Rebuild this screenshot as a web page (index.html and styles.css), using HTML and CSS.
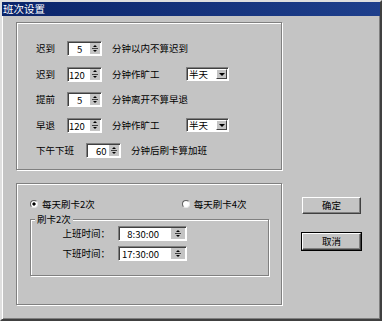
FILE: index.html
```html
<!DOCTYPE html>
<html>
<head>
<meta charset="utf-8">
<title>班次设置</title>
<link rel="stylesheet" href="styles.css">
</head>
<body>
<div class="window">
  <div class="titlebar">班次设置</div>
  <div class="client">
    <div class="main">
      <div class="group rules">
        <div class="row">
          <span class="lbl">迟到</span>
          <span class="spin"><span class="val v5">5</span><span class="arrows"></span></span>
          <span class="desc">分钟以内不算迟到</span>
        </div>
        <div class="row">
          <span class="lbl">迟到</span>
          <span class="spin"><span class="val v120">120</span><span class="arrows"></span></span>
          <span class="desc short">分钟作旷工</span>
          <span class="combo"><span class="text">半天</span><span class="drop"></span></span>
        </div>
        <div class="row">
          <span class="lbl">提前</span>
          <span class="spin"><span class="val v5">5</span><span class="arrows"></span></span>
          <span class="desc">分钟离开不算早退</span>
        </div>
        <div class="row">
          <span class="lbl">早退</span>
          <span class="spin"><span class="val v120">120</span><span class="arrows"></span></span>
          <span class="desc short">分钟作旷工</span>
          <span class="combo"><span class="text">半天</span><span class="drop"></span></span>
        </div>
        <div class="row">
          <span class="lbl">下午下班</span>
          <span class="spin"><span class="val v60">60</span><span class="arrows"></span></span>
          <span class="desc">分钟后刷卡算加班</span>
        </div>
      </div>
      <div class="group punch">
        <div class="radios">
          <span class="radio checked"><span class="dot"></span>每天刷卡2次</span>
          <span class="radio second"><span class="dot"></span>每天刷卡4次</span>
        </div>
        <fieldset class="inner">
          <legend>刷卡2次</legend>
          <div class="trow">
            <span class="tlbl">上班时间：</span>
            <span class="spin time"><span class="val">8:30:00</span><span class="arrows"></span></span>
          </div>
          <div class="trow">
            <span class="tlbl">下班时间：</span>
            <span class="spin time"><span class="val">17:30:00</span><span class="arrows"></span></span>
          </div>
        </fieldset>
      </div>
    </div>
    <div class="buttons">
      <div class="btn">确定</div>
      <div class="btn default">取消</div>
    </div>
  </div>
</div>
</body>
</html>
```
FILE: styles.css
```css
*{margin:0;padding:0;box-sizing:border-box;}
body{background:#fff;font:9.5px/1.3 "Noto Sans CJK SC","Liberation Sans",sans-serif;color:#000;}

.window{width:382px;height:321px;display:flex;flex-direction:column;background:#c4c4c4;border:2px solid;border-color:#dfdfdf #404040 #404040 #dfdfdf;box-shadow:inset 1px 1px 0 #fff,inset -1px -1px 0 #808080;}
.titlebar{height:14px;line-height:14px;padding-left:1px;font-size:10.5px;color:#fff;background:linear-gradient(to right,#0a246a,#1e3f8c);}
.client{flex:1;display:flex;padding:6px 0 0 14px;}
.main{width:266px;display:flex;flex-direction:column;gap:13px;}

/* etched frames */
.group{border:1px solid #808080;box-shadow:inset 1px 1px 0 #fff,1px 1px 0 #fff;}
.rules{height:148px;display:flex;flex-direction:column;gap:10.5px;padding:18px 0 0 19px;}
.row{display:flex;align-items:center;height:15px;}
.lbl{margin-right:12px;}
.desc{margin-left:10px;}
.desc.short{width:74px;}

/* sunken spin field */
.spin{display:flex;width:35px;height:15px;background:#fff;border:1px solid;border-color:#808080 #fff #fff #808080;box-shadow:inset 1px 1px 0 #404040;}
.val{flex:1;line-height:13px;padding-top:1px;white-space:nowrap;}
.v5{padding-left:9px;}
.v120{padding-left:1px;}
.v60{padding-left:9px;}
.arrows{width:10px;margin:1px 1px 1px 0;display:flex;flex-direction:column;justify-content:space-around;align-items:center;background:#c4c4c4 linear-gradient(#404040,#404040) center/6px 1px no-repeat;}
.arrows::before{content:"";border:2px solid transparent;border-top:0;border-bottom:2px solid #000;}
.arrows::after{content:"";border:2px solid transparent;border-bottom:0;border-top:2px solid #000;}

.combo{display:flex;width:43px;height:14px;background:#fff;border:1px solid;border-color:#808080 #fff #fff #808080;box-shadow:inset 1px 1px 0 #404040;}
.combo .text{flex:1;padding-left:2px;line-height:12px;}
.combo .drop{width:11px;margin:1px;display:flex;align-items:center;justify-content:center;background:#c4c4c4;border:1px solid;border-color:#fff #404040 #404040 #fff;}
.combo .drop::after{content:"";border:3px solid transparent;border-bottom:0;border-top:3px solid #000;}

.punch{height:122px;padding:14px 0 0 13px;}
.radios{display:flex;align-items:center;height:12px;}
.radio{display:flex;align-items:center;gap:4px;}
.radio.second{margin-left:87px;}
.dot{width:8px;height:8px;border-radius:50%;background:#fff;border:1px solid;border-color:#606060 #e8e8e8 #e8e8e8 #606060;}
.radio.checked .dot{background:radial-gradient(circle,#000 1.4px,#fff 1.8px);}

.inner{width:239px;margin-top:3px;padding:0 0 14px;border:1px solid #808080;box-shadow:inset 1px 1px 0 #fff,1px 1px 0 #fff;display:flex;flex-direction:column;gap:5px;}
.inner legend{margin-left:4px;padding:0 2px;background:#c4c4c4;line-height:13px;}
.trow{display:flex;align-items:center;gap:8px;}
.tlbl{width:79px;text-align:right;}
.spin.time{width:69px;}
.spin.time .val{text-align:right;padding-right:12px;}
.spin.time .arrows{width:14px;}

.buttons{display:flex;flex-direction:column;gap:19px;margin-left:20px;padding-top:175px;}
.btn{width:59px;height:17px;line-height:15px;text-align:center;background:#c4c4c4;border:1px solid;border-color:#fff #404040 #404040 #fff;box-shadow:inset -1px -1px 0 #808080;}
.btn.default{outline:1px solid #000;}
```
